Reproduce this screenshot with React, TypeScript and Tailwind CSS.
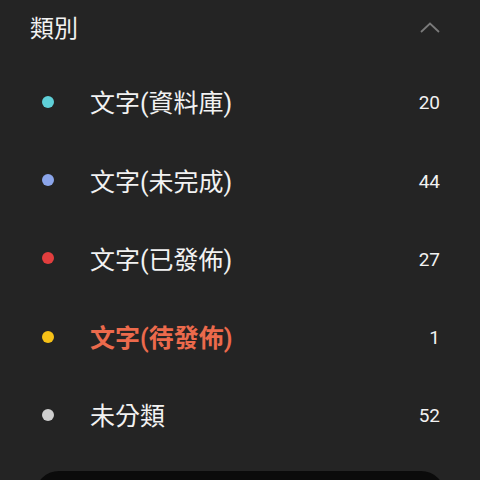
const categories = [
  { name: "文字(資料庫)", count: 20, dot: "bg-[#5fd0d8]" },
  { name: "文字(未完成)", count: 44, dot: "bg-[#8ba5ea]" },
  { name: "文字(已發佈)", count: 27, dot: "bg-[#e23e3e]" },
  { name: "文字(待發佈)", count: 1, dot: "bg-[#f6c117]", active: true },
  { name: "未分類", count: 52, dot: "bg-[#cfcfcf]" },
];

const App = () => {
  return (
    <main className="w-[480px] h-[480px] overflow-hidden bg-[#242424] font-['Roboto','Noto_Sans_CJK_TC',sans-serif]">
      <div className="h-[54px] flex items-center justify-between pl-[30px] pr-[40px]">
        <h1 className="text-[24px] text-[#f2f2f2] font-['Noto_Sans_CJK_TC',sans-serif]">類別</h1>
        <svg width="20" height="11" viewBox="0 0 20 11" fill="none">
          <path d="M1 10 L10 1.5 L19 10" stroke="#7a7a7a" strokeWidth="1.8" />
        </svg>
      </div>
      <ul className="mt-[9px]">
        {categories.map((c) => (
          <li key={c.name} className="h-[78.2px] flex items-center pl-[42px] pr-[40px]">
            <span className={`w-3 h-3 rounded-full ${c.dot}`} />
            <span
              className={`ml-[36px] pt-[4px] flex-1 text-[25px] font-['Roboto','Noto_Sans_CJK_TC',sans-serif] ${
                c.active ? "text-[#ec6a4c] font-semibold" : "text-[#f2f2f2]"
              }`}
            >
              {c.name}
            </span>
            <span className="pt-[3px] text-[19px] text-[#f2f2f2] font-['Roboto',sans-serif]">{c.count}</span>
          </li>
        ))}
      </ul>
      <div className="mt-[17px] mx-[35px] h-[60px] rounded-[24px] bg-[#0b0b0b]" />
    </main>
  );
};

export default App;
